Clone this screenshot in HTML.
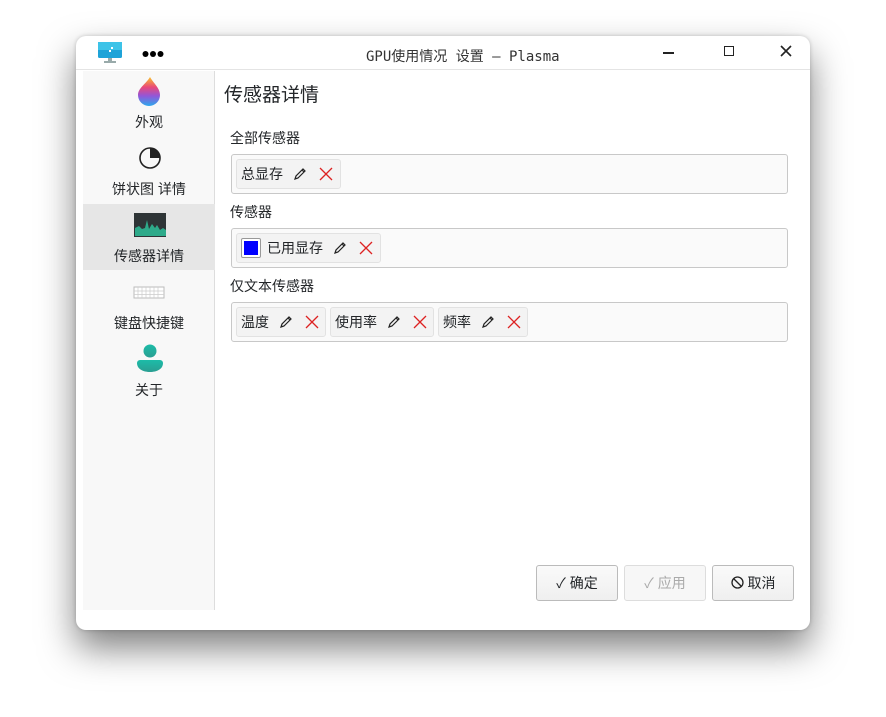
<!DOCTYPE html>
<html><head><meta charset="utf-8"><style>
*{box-sizing:border-box;margin:0;padding:0}
body{width:886px;height:717px;background:#fff;font-family:"Liberation Sans","Noto Sans CJK SC",sans-serif;color:#232629;position:relative;overflow:hidden}
.win{position:absolute;left:76px;top:36px;width:734px;height:594px;background:#fff;border-radius:10px;box-shadow:0 18px 36px rgba(0,0,0,.5),0 0 4px rgba(0,0,0,.2)}
.title{position:absolute;left:0;top:0;width:734px;height:34px;border-bottom:1px solid #e4e4e4;margin-left:0}
.title .t{position:absolute;left:290px;top:10px;font-family:"DejaVu Sans Mono","Noto Sans CJK SC",monospace;font-size:14px;color:#333}
.side{position:absolute;left:7px;top:35px;width:132px;height:539px;background:#f8f8f8;border-right:1px solid #ddd}
.ic{position:absolute}
.tx{position:absolute;left:0;width:132px;text-align:center;font-size:14px;line-height:19px}
.sel{position:absolute;left:0;width:132px;background:#e6e6e6}
.h1{position:absolute;left:148px;top:44px;font-size:19px}
.lbl{position:absolute;left:154px;font-size:14px}
.box{position:absolute;left:155px;width:557px;height:40px;border:1px solid #c8c8c8;border-radius:3px;background:#fafafa}
.chip{position:absolute;top:4px;height:30px;border:1px solid #e2e2e2;border-radius:3px;background:#f3f3f3;font-size:14px;line-height:28px;padding-left:4px}
.chip svg{position:absolute;top:7px}
.btn{position:absolute;top:529px;width:82px;height:36px;border:1px solid #bbb;border-radius:3px;background:linear-gradient(#fafafa,#efefef);font-size:14px;line-height:34px;text-align:center}
</style></head><body>
<div class="win">
 <div class="title">
  <svg style="position:absolute;left:21px;top:5px" width="26" height="24"><rect x="1" y="1" width="24" height="16" rx="1.5" fill="#1ea3d8"/><rect x="1" y="1" width="24" height="8" fill="#3dc3e8"/><rect x="11" y="17" width="4" height="3" fill="#9aa"/><rect x="7" y="20" width="12" height="2" fill="#9aa"/><rect x="14" y="6" width="2" height="2" fill="#fff"/><rect x="12" y="9" width="2" height="2" fill="#fff"/></svg>
  <svg style="position:absolute;left:66px;top:14px" width="22" height="8"><circle cx="3.5" cy="4" r="3" fill="#000"/><circle cx="11" cy="4" r="3" fill="#000"/><circle cx="18.5" cy="4" r="3" fill="#000"/></svg>
  <div class="t">GPU使用情况 设置 — Plasma</div>
  <div style="position:absolute;left:587px;top:16px;width:11px;height:1.5px;background:#222"></div>
  <div style="position:absolute;left:648px;top:10px;width:10px;height:10px;border:1.3px solid #222"></div>
  <svg style="position:absolute;left:704px;top:9px" width="12" height="12"><path d="M1 1L11 11M11 1L1 11" stroke="#222" stroke-width="1.6"/></svg>
 </div>
 <div class="side">
  <svg class="ic" style="left:53px;top:5px" width="26" height="30"><defs><linearGradient id="g" x1="0" y1="0" x2="0" y2="1"><stop offset="0" stop-color="#f9c22b"/><stop offset=".35" stop-color="#e9487a"/><stop offset=".65" stop-color="#9356d8"/><stop offset="1" stop-color="#2aa8ee"/></linearGradient></defs><path d="M14 1C18 8 24 12 24 19a11 11 0 0 1-22 0C2 12 10 8 14 1z" fill="url(#g)"/></svg>
  <div class="tx" style="top:42px">外观</div>
  <svg class="ic" style="left:55px;top:75px" width="24" height="24"><circle cx="12" cy="12" r="10" fill="none" stroke="#222" stroke-width="1.6"/><path d="M12 12V2A10 10 0 0 1 22 12z" fill="#222"/></svg>
  <div class="tx" style="top:109px">饼状图 详情</div>
  <div class="sel" style="top:133px;height:66px"></div>
  <svg class="ic" style="left:50px;top:141px" width="34" height="26"><rect x="1" y="1" width="32" height="24" fill="#2e3436"/><path d="M2 24V16l4-2 3 3 3-1 2-8 2 9 3-5 3 4 2-3 3 5 3-2 3 2v6z" fill="#2eaa8a"/></svg>
  <div class="tx" style="top:176px">传感器详情</div>
  <svg class="ic" style="left:50px;top:215px" width="32" height="14"><rect x="1" y="1" width="30" height="11" fill="#fff" stroke="#bbb"/><path d="M1 5h30M1 8.5h30M5 1v11M9 1v11M13 1v11M17 1v11M21 1v11M25 1v11" stroke="#ccc" stroke-width=".7"/></svg>
  <div class="tx" style="top:243px">键盘快捷键</div>
  <svg class="ic" style="left:53px;top:273px" width="28" height="30"><defs><linearGradient id="p" x1="0" y1="0" x2="0" y2="1"><stop offset="0" stop-color="#1cbca8"/><stop offset="1" stop-color="#2a9e92"/></linearGradient></defs><circle cx="14" cy="7" r="6.5" fill="url(#p)"/><path d="M4 16h20a3 3 0 0 1 3 3c0 6-6 9-13 9S1 25 1 19a3 3 0 0 1 3-3z" fill="url(#p)"/></svg>
  <div class="tx" style="top:310px">关于</div>
 </div>
 <div class="h1">传感器详情</div>
 <div class="lbl" style="top:92px">全部传感器</div>
 <div class="box" style="top:118px">
  <div class="chip" style="left:4px;width:105px">总显存
   <svg style="left:56px" width="14" height="14"><path d="M2 12l1-3 7-7 2 2-7 7z M9 3l2 2" fill="none" stroke="#222" stroke-width="1.2"/></svg>
   <svg style="left:82px" width="14" height="14"><path d="M1 1L13 13M13 1L1 13" stroke="#d22" stroke-width="1.3"/></svg></div>
 </div>
 <div class="lbl" style="top:166px">传感器</div>
 <div class="box" style="top:192px">
  <div class="chip" style="left:4px;width:145px"><span style="display:inline-block;width:20px;height:20px;border:1px solid #999;background:#fff;vertical-align:middle;margin:-3px 6px 0 0;padding:2px;border-radius:2px"><span style="display:block;width:14px;height:14px;background:#0000ff"></span></span>已用显存
   <svg style="left:96px" width="14" height="14"><path d="M2 12l1-3 7-7 2 2-7 7z M9 3l2 2" fill="none" stroke="#222" stroke-width="1.2"/></svg>
   <svg style="left:122px" width="14" height="14"><path d="M1 1L13 13M13 1L1 13" stroke="#d22" stroke-width="1.3"/></svg></div>
 </div>
 <div class="lbl" style="top:240px">仅文本传感器</div>
 <div class="box" style="top:266px">
  <div class="chip" style="left:4px;width:90px">温度
   <svg style="left:42px" width="14" height="14"><path d="M2 12l1-3 7-7 2 2-7 7z M9 3l2 2" fill="none" stroke="#222" stroke-width="1.2"/></svg>
   <svg style="left:68px" width="14" height="14"><path d="M1 1L13 13M13 1L1 13" stroke="#d22" stroke-width="1.3"/></svg></div>
  <div class="chip" style="left:98px;width:104px">使用率
   <svg style="left:56px" width="14" height="14"><path d="M2 12l1-3 7-7 2 2-7 7z M9 3l2 2" fill="none" stroke="#222" stroke-width="1.2"/></svg>
   <svg style="left:82px" width="14" height="14"><path d="M1 1L13 13M13 1L1 13" stroke="#d22" stroke-width="1.3"/></svg></div>
  <div class="chip" style="left:206px;width:90px">频率
   <svg style="left:42px" width="14" height="14"><path d="M2 12l1-3 7-7 2 2-7 7z M9 3l2 2" fill="none" stroke="#222" stroke-width="1.2"/></svg>
   <svg style="left:68px" width="14" height="14"><path d="M1 1L13 13M13 1L1 13" stroke="#d22" stroke-width="1.3"/></svg></div>
 </div>
 <div class="btn" style="left:460px">✓ 确定</div>
 <div class="btn" style="left:548px;color:#aaa;border-color:#ddd;background:#f7f7f7">✓ 应用</div>
 <div class="btn" style="left:636px"><svg width="13" height="13" style="vertical-align:-1px;margin-right:4px"><circle cx="6.5" cy="6.5" r="5.5" fill="none" stroke="#222" stroke-width="1.3"/><path d="M3 3l7 7" stroke="#222" stroke-width="1.3"/></svg>取消</div>
</div>
</body></html>
